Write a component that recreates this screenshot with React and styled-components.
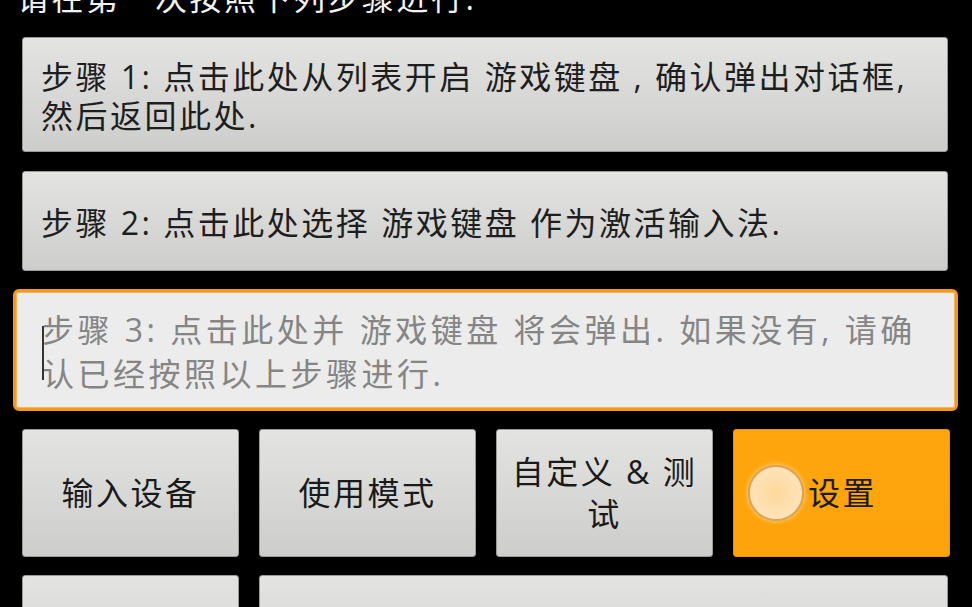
import React from 'react';
import styled, { createGlobalStyle } from 'styled-components';

const GlobalStyle = createGlobalStyle`
  html, body {
    margin: 0;
    padding: 0;
    background: #000;
    overflow: hidden;
  }
  body {
    font-family: "Open Sans", "Noto Sans CJK SC", sans-serif;
  }
`;

const Screen = styled.div`
  width: 972px;
  height: 607px;
  overflow: hidden;
  background: #000;
  display: flex;
  flex-direction: column;
  padding: 0 24px 0 22px;
  box-sizing: border-box;

  & > * {
    flex-shrink: 0;
  }
`;

const Title = styled.div`
  margin: -20px 0 22px -5px;
  color: #f2f2f2;
  font-size: 32px;
  letter-spacing: 2.5px;
  line-height: 35px;
  white-space: nowrap;
`;

const StepButton = styled.div`
  height: ${p => p.h}px;
  box-sizing: border-box;
  display: flex;
  align-items: center;
  padding: 3px 18px 0;
  margin-bottom: ${p => p.gap || 0}px;
  background: linear-gradient(#e3e4e2, #cdcecc);
  border: 1px solid #9a9a9a;
  border-radius: 3px;
  color: #1e1e1e;
  font-size: 32px;
  letter-spacing: 2.5px;
  line-height: 39px;
`;

const FocusedStep = styled.div`
  position: relative;
  height: 122px;
  box-sizing: border-box;
  margin: 0 -10px 18px -9px;
  display: flex;
  align-items: center;
  padding: 4px 34px 0 26px;
  background: #ececec;
  border: 3px solid #f39a1e;
  border-radius: 6px;
  box-shadow: inset 0 0 0 1px #f7b45a;
  color: #858585;
  font-size: 32px;
  letter-spacing: 3.5px;
  line-height: 44px;

  &::before {
    content: '';
    position: absolute;
    left: 26px;
    top: 34px;
    width: 1.5px;
    height: 54px;
    background: #333;
  }
`;

const ButtonGrid = styled.div`
  display: grid;
  grid-template-columns: repeat(4, 1fr);
  grid-auto-rows: 128px;
  column-gap: 20px;
  row-gap: 18px;
  margin-right: -2px;
`;

const GridButton = styled.div`
  grid-column: ${p => p.span ? `span ${p.span}` : 'auto'};
  margin-right: ${p => p.span ? 2 : 0}px;
  display: flex;
  align-items: center;
  justify-content: center;
  text-align: center;
  padding: 0 14px;
  background: ${p => p.active
    ? 'linear-gradient(#ffa60e, #fda20a)'
    : 'linear-gradient(#e3e4e2, #cdcecc)'};
  border: 1px solid ${p => p.active ? '#e89410' : '#9a9a9a'};
  border-radius: 3px;
  color: #1a1a1a;
  font-size: 32px;
  letter-spacing: 2.5px;
  line-height: 42px;
`;

const ToggleButton = styled(GridButton)`
  justify-content: flex-start;
  padding: 0 14px;
  gap: 4px;
`;

const Radio = styled.span`
  flex: none;
  width: 52px;
  height: 52px;
  border-radius: 50%;
  background: radial-gradient(circle, #fed89c 0%, #fee3b8 70%, #fde7c4 100%);
  border: 2px solid #d9a35c;
  box-shadow: 0 0 4px 1px rgba(255, 220, 150, 0.7);
`;

export default function App() {
  return (
    <>
      <GlobalStyle />
      <Screen>
        <Title>请在第一次按照下列步骤进行.</Title>
        <StepButton h={115} gap={19}>
          步骤 1: 点击此处从列表开启 游戏键盘 , 确认弹出对话框, 然后返回此处.
        </StepButton>
        <StepButton h={100} gap={18}>
          步骤 2: 点击此处选择 游戏键盘 作为激活输入法.
        </StepButton>
        <FocusedStep>
          步骤 3: 点击此处并 游戏键盘 将会弹出. 如果没有, 请确认已经按照以上步骤进行.
        </FocusedStep>
        <ButtonGrid>
          <GridButton>输入设备</GridButton>
          <GridButton>使用模式</GridButton>
          <GridButton>自定义 &amp; 测试</GridButton>
          <ToggleButton active>
            <Radio />
            设置
          </ToggleButton>
          <GridButton />
          <GridButton span={3} />
        </ButtonGrid>
      </Screen>
    </>
  );
}
